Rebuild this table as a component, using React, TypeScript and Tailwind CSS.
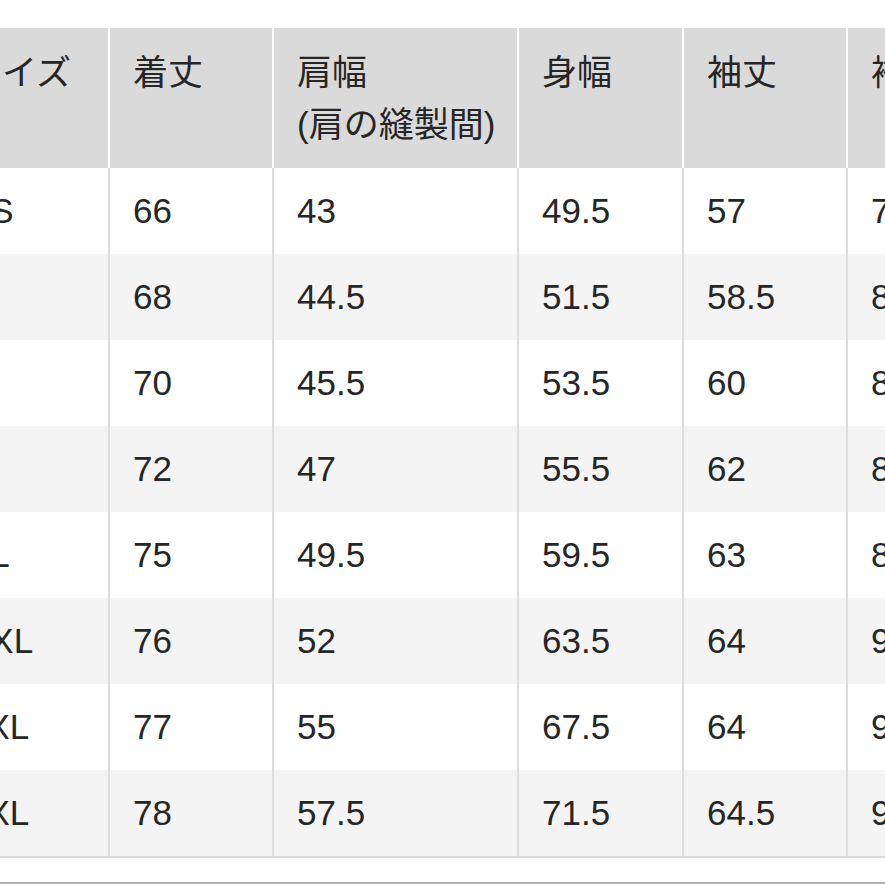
const columns = ["サイズ", "着丈", "肩幅\n(肩の縫製間)", "身幅", "袖丈", "裄丈"];

const rows = [
    ["XS", "66", "43", "49.5", "57", "78"],
    ["S", "68", "44.5", "51.5", "58.5", "80.5"],
    ["M", "70", "45.5", "53.5", "60", "82.5"],
    ["L", "72", "47", "55.5", "62", "84.5"],
    ["XL", "75", "49.5", "59.5", "63", "87.5"],
    ["XXL", "76", "52", "63.5", "64", "90"],
    ["3XL", "77", "55", "67.5", "64", "92"],
    ["4XL", "78", "57.5", "71.5", "64.5", "94"],
];

const grid = "grid grid-cols-[164px_162px_243px_163px_162px_200px] gap-x-[2px]";

export default function App() {
    return (
        <div
            className="h-[885px] w-[885px] overflow-hidden bg-white text-[35px] text-[#262626]"
            style={{ fontFamily: '"Liberation Sans", "Noto Sans CJK JP", sans-serif' }}
        >
            <div className="-ml-[56px] w-[1100px] pt-[28px]">
                {/* Header */}
                <div className={`${grid} bg-white`}>
                    {columns.map((c) => (
                        <div key={c} className="h-[140px] bg-[#dadada] px-[23px] pt-[19px] leading-[52px] whitespace-pre">
                            {c}
                        </div>
                    ))}
                </div>

                {/* Body */}
                <div className="border-b-2 border-[#dcdcdc]">
                    {rows.map((r, i) => (
                        <div key={r[0]} className={`${grid} bg-[#dddddd]`}>
                            {r.map((v, j) => (
                                <div
                                    key={j}
                                    className={`flex h-[86px] items-center px-[23px] ${i % 2 === 1 ? "bg-[#f4f4f4]" : "bg-white"}`}
                                >
                                    {v}
                                </div>
                            ))}
                        </div>
                    ))}
                </div>
            </div>

            <div className="mt-[24px] h-[2px] bg-[#b3b3b3]" />
        </div>
    );
}
